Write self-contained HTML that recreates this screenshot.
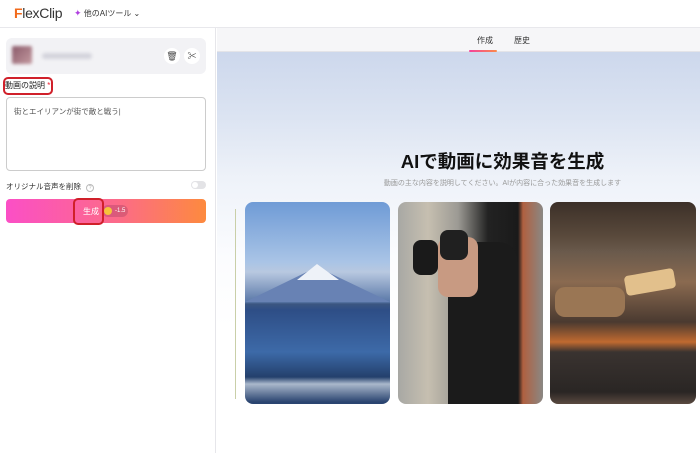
<!DOCTYPE html>
<html><head><meta charset="utf-8"><style>
*{margin:0;padding:0;box-sizing:border-box}
body{width:700px;height:453px;overflow:hidden;background:#fff;font-family:"Liberation Sans","Noto Sans CJK JP",sans-serif;position:relative;color:#222}
.hdr{position:absolute;left:0;top:0;width:700px;height:28px;background:#fff;border-bottom:1px solid #e8e8ec}
.logo{position:absolute;left:14px;top:5px;font-size:14px;color:#333;letter-spacing:-0.3px}
.logo b{color:#f26a1b;font-weight:bold}
.tools{position:absolute;left:74px;top:8px;font-size:8px;color:#333}
.tools span{color:#b040e0;font-size:9px}
.left{position:absolute;left:0;top:28px;width:216px;height:425px;background:#fff;border-right:1px solid #e6e6ea}
.card{position:absolute;left:6px;top:10px;width:200px;height:36px;background:#f2f2f5;border-radius:6px}
.thumb{position:absolute;left:6px;top:8px;width:20px;height:18px;background:linear-gradient(135deg,#8a5a6a,#c49aa0);border-radius:2px;filter:blur(1.5px)}
.blur{position:absolute;left:36px;top:15px;width:50px;height:6px;background:#d4d4dc;border-radius:3px;filter:blur(1.5px)}
.ib{position:absolute;top:10px;width:16px;height:16px;border-radius:50%;background:#fff;font-size:9px;text-align:center;line-height:16px;color:#444}
.lbl{position:absolute;left:5px;top:80px;font-size:8px;color:#222}
.lbl i{color:#e23;font-style:normal}
.redbox{position:absolute;border:2px solid #d0202a;border-radius:5px}
.ta{position:absolute;left:6px;top:97px;width:200px;height:74px;border:1px solid #ccc;border-radius:4px;font-size:7.5px;color:#555;padding:8px 7px}
.orig{position:absolute;left:6px;top:181px;font-size:7.5px;color:#333}
.q{display:inline-block;width:8px;height:8px;border:1px solid #bbb;border-radius:50%;font-size:5px;text-align:center;line-height:7px;color:#aaa;margin-left:3px}
.tog{position:absolute;left:191px;top:181px;width:15px;height:8px;background:#e3e3e6;border-radius:4px}
.tog:after{content:"";position:absolute;left:1px;top:1px;width:6px;height:6px;background:#fff;border-radius:50%}
.btn{position:absolute;left:6px;top:199px;width:200px;height:24px;border-radius:4px;background:linear-gradient(90deg,#fb4fc6,#fc6a8a 55%,#fd8a3e)}
.btn .t{position:absolute;left:77px;top:7px;font-size:8px;color:#fff}
.btn .c{position:absolute;left:96px;top:6px;height:12px;width:26px;border-radius:6px;background:rgba(120,40,80,.25);font-size:6px;color:#fff;line-height:12px;padding-left:13px}
.btn .c:before{content:"";position:absolute;left:2px;top:2px;width:8px;height:8px;border-radius:50%;background:#f6c33c}
.right{position:absolute;left:217px;top:28px;width:483px;height:425px;background:linear-gradient(180deg,#c7d3ea 0,#dce4f2 90px,#eef2f9 150px,#fbfcfe 230px,#fff 300px)}
.tabs{position:absolute;left:0;top:0;width:483px;height:24px;background:#f6f6f8;border-bottom:1px solid #e4e4e8}
.tab{position:absolute;top:7px;font-size:8px;color:#333}
.ul{position:absolute;left:252px;top:22px;width:28px;height:2px;background:linear-gradient(90deg,#f4429e,#fb8a4a);border-radius:1px}
h1{position:absolute;left:44px;width:483px;top:120px;text-align:center;font-size:18.5px;font-weight:bold;color:#111}
.sub{position:absolute;left:44px;width:483px;top:150px;text-align:center;font-size:7px;color:#999}
.img{position:absolute;top:174px;height:202px;border-radius:8px;overflow:hidden}
.vl{position:absolute;left:18px;top:181px;width:1px;height:190px;background:#c9cfa8}
</style></head><body>
<div class="hdr"><div class="logo"><b>F</b>lexClip</div><div class="tools"><span>✦</span> 他のAIツール ⌄</div></div>
<div class="left">
 <div class="card"><div class="thumb"></div><div class="blur"></div>
  <div class="ib" style="left:158px">🗑</div><div class="ib" style="left:178px">✂</div></div>
</div>
<div class="lbl">動画の説明 <i>*</i></div>
<div class="redbox" style="left:3px;top:77px;width:50px;height:18px"></div>
<div class="ta">街とエイリアンが街で敵と戦う|</div>
<div class="orig">オリジナル音声を削除 <span class="q">?</span></div>
<div class="tog"></div>
<div class="btn"><div class="t">生成</div><div class="c">-1.5</div></div>
<div class="redbox" style="left:73px;top:198px;width:31px;height:27px"></div>
<div class="right">
 <div class="tabs"><div class="tab" style="left:260px">作成</div><div class="tab" style="left:297px">歴史</div><div class="ul"></div></div>
 <h1>AIで動画に効果音を生成</h1>
 <div class="sub">動画の主な内容を説明してください。AIが内容に合った効果音を生成します</div>
 <div class="vl"></div>
 <div class="img" style="left:28px;width:145px;background:linear-gradient(180deg,#6f9bd6 0,#a9c4e6 60px,#b8c8e0 70px,#5a78a8 100px,#3b5680 102px,#2e4e86 108px,#3d6aa8 150px,#24406c 175px,#aab8cc 182px,#2a4470 200px)">
  <div style="position:absolute;left:0;top:65px;width:0;height:0;border-left:72px solid transparent;border-right:73px solid transparent;border-bottom:35px solid #6882b4"></div>
  <div style="position:absolute;left:52px;top:62px;width:0;height:0;border-left:20px solid transparent;border-right:22px solid transparent;border-bottom:16px solid #eef2f8"></div>
 </div>
 <div class="img" style="left:181px;width:145px;background:linear-gradient(90deg,#a8a8a4 0,#c6bfb0 30px,#9c9a94 60px,#222 90px,#1a1a1a 120px,#b06040 125px,#8a8884 145px)">
  <div style="position:absolute;left:50px;top:40px;width:70px;height:162px;background:#1b1b1b;border-radius:20px 20px 0 0"></div>
  <div style="position:absolute;left:40px;top:35px;width:40px;height:60px;background:#c89a82;border-radius:10px"></div>
  <div style="position:absolute;left:15px;top:38px;width:25px;height:35px;background:#1a1a1a;border-radius:8px"></div>
  <div style="position:absolute;left:42px;top:28px;width:28px;height:30px;background:#202020;border-radius:8px"></div>
 </div>
 <div class="img" style="left:333px;width:146px;background:linear-gradient(180deg,#3c3028 0,#5a4a3c 35px,#6a5a4c 50px,#8a6a50 80px,#4a3a30 120px,#c06a30 140px,#3a3330 150px,#2a2624 190px,#5a4a40 202px)">
  <div style="position:absolute;left:75px;top:70px;width:50px;height:20px;background:#e2c08c;border-radius:4px;transform:rotate(-10deg)"></div>
  <div style="position:absolute;left:5px;top:85px;width:70px;height:30px;background:#9a7654;border-radius:10px"></div>
 </div>
</div>
</body></html>
